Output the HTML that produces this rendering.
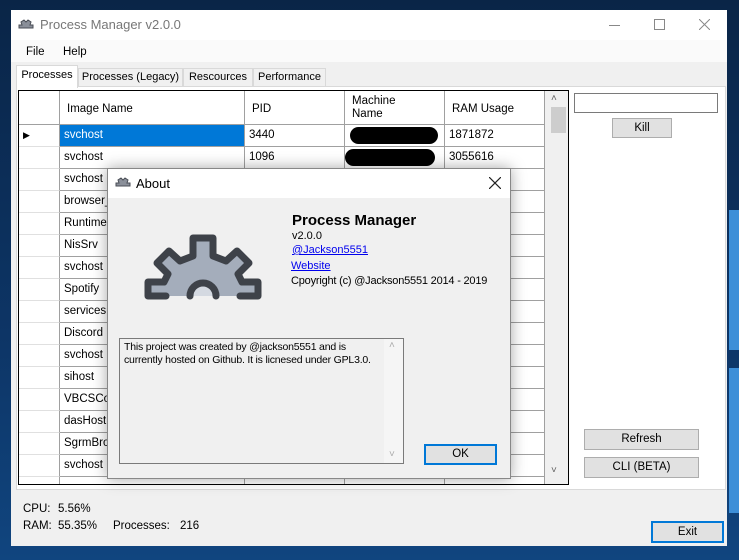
<!DOCTYPE html>
<html><head><meta charset="utf-8"><style>
*{margin:0;padding:0;box-sizing:border-box}
body{width:739px;height:560px;overflow:hidden;position:relative;font-family:"Liberation Sans",sans-serif;font-size:11.5px;color:#000;
background:linear-gradient(180deg,#0a2547 0%,#0d3566 60%,#10457f 100%)}
.a{position:absolute;white-space:nowrap}
.win{left:11px;top:10px;width:716px;height:536px;background:#f0f0f0}
.cell{position:absolute;height:22px;line-height:21px;padding-left:4px;border-right:1px solid #a0a0a0;border-bottom:1px solid #a0a0a0;background:#fff;white-space:nowrap;overflow:hidden}
.btn{position:absolute;background:#e1e1e1;border:1px solid #adadad;text-align:center}
.tab{position:absolute;border:1px solid #d9d9d9;border-bottom:none;background:#f0f0f0;text-align:center;line-height:17px;white-space:nowrap;font-size:11px}
</style></head><body>
<div class="a" style="left:729px;top:210px;width:10px;height:140px;background:#3d8fd8"></div>
<div class="a" style="left:729px;top:368px;width:10px;height:145px;background:#3d8fd8"></div>

<div class="a win"></div>
<div class="a" style="left:11px;top:10px;width:716px;height:30px;background:#fff"></div>
<svg class="a" style="left:18px;top:19px" width="16" height="10" viewBox="0 0 16 10"><path d="M1,9 L1,6 L4,6 L3,3 L6,1 L8,3 L10,1 L13,3 L12,6 L15,6 L15,9 Z" fill="#8a8f99" stroke="#4a4e56" stroke-width="1"/></svg>
<div class="a" style="left:40px;top:17px;font-size:13px;color:#777">Process Manager v2.0.0</div>
<div class="a" style="left:609px;top:25px;width:11px;height:1px;background:#888"></div>
<div class="a" style="left:654px;top:19px;width:11px;height:11px;border:1px solid #888"></div>
<svg class="a" style="left:699px;top:19px" width="11" height="11"><path d="M0,0 L11,11 M11,0 L0,11" stroke="#888" stroke-width="1"/></svg>
<div class="a" style="left:11px;top:40px;width:716px;height:22px;background:#fafafa"></div>
<div class="a" style="left:26px;top:46px">File</div>
<div class="a" style="left:63px;top:46px">Help</div>
<div class="a" style="left:16px;top:86px;width:710px;height:404px;border:1px solid #d9d9d9;background:#fff"></div>
<div class="tab" style="left:78px;top:68px;width:105px;height:18px">Processes (Legacy)</div>
<div class="tab" style="left:183px;top:68px;width:70px;height:18px">Rescources</div>
<div class="tab" style="left:253px;top:68px;width:73px;height:18px">Performance</div>
<div class="tab" style="left:16px;top:65px;width:62px;height:23px;background:#fff;line-height:19px">Processes</div>

<div class="a" style="left:18px;top:90px;width:551px;height:395px;border:1px solid #000;background:#fff;overflow:hidden">
 <div class="a" style="left:0;top:0;width:526px;height:34px;background:#fff;border-bottom:1px solid #a0a0a0"></div>
 <div class="a" style="left:40px;top:0;width:1px;height:395px;background:#a0a0a0"></div>
 <div class="a" style="left:225px;top:0;width:1px;height:395px;background:#a0a0a0"></div>
 <div class="a" style="left:325px;top:0;width:1px;height:395px;background:#a0a0a0"></div>
 <div class="a" style="left:425px;top:0;width:1px;height:395px;background:#a0a0a0"></div>
 <div class="a" style="left:525px;top:0;width:1px;height:395px;background:#a0a0a0"></div>
 <div class="a" style="left:48px;top:12px">Image Name</div>
 <div class="a" style="left:233px;top:12px">PID</div>
 <div class="a" style="left:333px;top:4px;line-height:13px">Machine<br>Name</div>
 <div class="a" style="left:433px;top:12px">RAM Usage</div>
 <div id="rows"></div>
 <div class="a" style="left:526px;top:0;width:23px;height:393px;background:#f0f0f0"></div>
 <div class="a" style="left:532px;top:2px;color:#606060;font-size:10px">˄</div>
 <div class="a" style="left:532px;top:16px;width:15px;height:26px;background:#cdcdcd"></div>
 <div class="a" style="left:532px;top:374px;color:#606060;font-size:10px">˅</div>
</div>

<div class="a" style="left:574px;top:93px;width:144px;height:20px;border:1px solid #7a7a7a;background:#fff"></div>
<div class="btn" style="left:612px;top:118px;width:60px;height:20px;line-height:18px">Kill</div>
<div class="btn" style="left:584px;top:429px;width:115px;height:21px;line-height:19px">Refresh</div>
<div class="btn" style="left:584px;top:457px;width:115px;height:21px;line-height:19px">CLI (BETA)</div>

<div class="a" style="left:23px;top:503px">CPU:</div>
<div class="a" style="left:58px;top:503px">5.56%</div>
<div class="a" style="left:23px;top:520px">RAM:</div>
<div class="a" style="left:58px;top:520px">55.35%</div>
<div class="a" style="left:113px;top:520px">Processes:</div>
<div class="a" style="left:180px;top:520px">216</div>
<div class="btn" style="left:651px;top:521px;width:73px;height:22px;border:2px solid #0078d7;line-height:18px">Exit</div>

<div class="a" style="left:107px;top:168px;width:404px;height:311px;background:#f0f0f0;border:1px solid #888;box-shadow:0 0 14px rgba(0,0,0,.35)"></div>
<div class="a" style="left:108px;top:169px;width:402px;height:29px;background:#fff"></div>
<svg class="a" style="left:115px;top:177px" width="16" height="10" viewBox="0 0 16 10"><path d="M1,9 L1,6 L4,6 L3,3 L6,1 L8,3 L10,1 L13,3 L12,6 L15,6 L15,9 Z" fill="#8a8f99" stroke="#4a4e56" stroke-width="1"/></svg>
<div class="a" style="left:136px;top:176px;font-size:13px">About</div>
<svg class="a" style="left:489px;top:177px" width="12" height="12"><path d="M0,0 L12,12 M12,0 L0,12" stroke="#222" stroke-width="1.2"/></svg>
<svg class="a" style="left:140px;top:232px" width="130" height="75" viewBox="0 0 130 75">
 <path d="M8,64 L8,50 L24,50 L28,42 L17,31 L29,19 L40,29 L53,24 L53,6 L73,6 L73,24 L86,29 L97,19 L109,31 L98,42 L102,50 L118,50 L118,64 Z" fill="#a4adbb"/>
 <path d="M50,64 A13,13 0 0 1 76,64 Z" fill="#d4d9e1"/>
 <path d="M26,64 L8,64 L8,50 L24,50 L28,42 L17,31 L29,19 L40,29 L53,24 L53,6 L73,6 L73,24 L86,29 L97,19 L109,31 L98,42 L102,50 L118,50 L118,64 L100,64" fill="none" stroke="#3e4249" stroke-width="7" stroke-linejoin="round" stroke-linecap="round"/>
 <path d="M50,64 A13,13 0 0 1 76,64" fill="none" stroke="#3e4249" stroke-width="7" stroke-linecap="round"/>
</svg>
<div class="a" style="left:292px;top:212px;font-size:15px;font-weight:bold">Process Manager</div>
<div class="a" style="left:292px;top:230px;font-size:11px">v2.0.0</div>
<div class="a" style="left:292px;top:244px;color:#0000ee;text-decoration:underline;font-size:11px">@Jackson5551</div>
<div class="a" style="left:291px;top:260px;color:#0000ee;text-decoration:underline;font-size:11px">Website</div>
<div class="a" style="left:291px;top:275px;font-size:11px;letter-spacing:-0.2px">Cpoyright (c) @Jackson5551 2014 - 2019</div>
<div class="a" style="left:119px;top:338px;width:285px;height:126px;border:1px solid #7a7a7a;background:#f0f0f0"></div>
<div class="a" style="left:124px;top:341px;width:258px;line-height:13px;font-size:10.5px;white-space:normal;letter-spacing:-0.2px">This project was created by @jackson5551 and is currently hosted on Github. It is licnesed under GPL3.0.</div>
<div class="a" style="left:384px;top:339px;width:19px;height:124px;background:#f5f5f5"></div>
<div class="a" style="left:389px;top:340px;color:#aaa;font-size:10px">˄</div>
<div class="a" style="left:389px;top:449px;color:#aaa;font-size:10px">˅</div>
<div class="btn" style="left:424px;top:444px;width:73px;height:21px;border:2px solid #0078d7;line-height:17px">OK</div>

<script>
var names=["svchost","svchost","svchost","browser_","Runtime","NisSrv","svchost","Spotify","services","Discord","svchost","sihost","VBCSCom","dasHost","SgrmBro","svchost",""];
var h="";
for(var i=0;i<names.length;i++){
 var t=34+i*22;
 h+='<div class="cell" style="left:0;top:'+t+'px;width:41px;border-right:1px solid #a0a0a0;border-bottom:1px solid #e0e0e0">'+(i==0?'<span style="font-size:9px">&#9654;</span>':'')+'</div>';
 h+='<div class="cell" style="left:41px;top:'+t+'px;width:185px;'+(i==0?'background:#0078d7;color:#fff':'')+'">'+names[i]+'</div>';
 var p=i==0?"3440":i==1?"1096":"";
 var r=i==0?"1871872":i==1?"3055616":"";
 h+='<div class="cell" style="left:226px;top:'+t+'px;width:100px">'+p+'</div>';
 h+='<div class="cell" style="left:326px;top:'+t+'px;width:100px">'+(i<2?'<div style="position:absolute;left:'+(i==0?5:0)+'px;top:2px;width:'+(i==0?88:90)+'px;height:17px;background:#000;border-radius:9px"></div>':'')+'</div>';
 h+='<div class="cell" style="left:426px;top:'+t+'px;width:100px">'+r+'</div>';
}
document.getElementById("rows").innerHTML=h;
</script>
</body></html>
